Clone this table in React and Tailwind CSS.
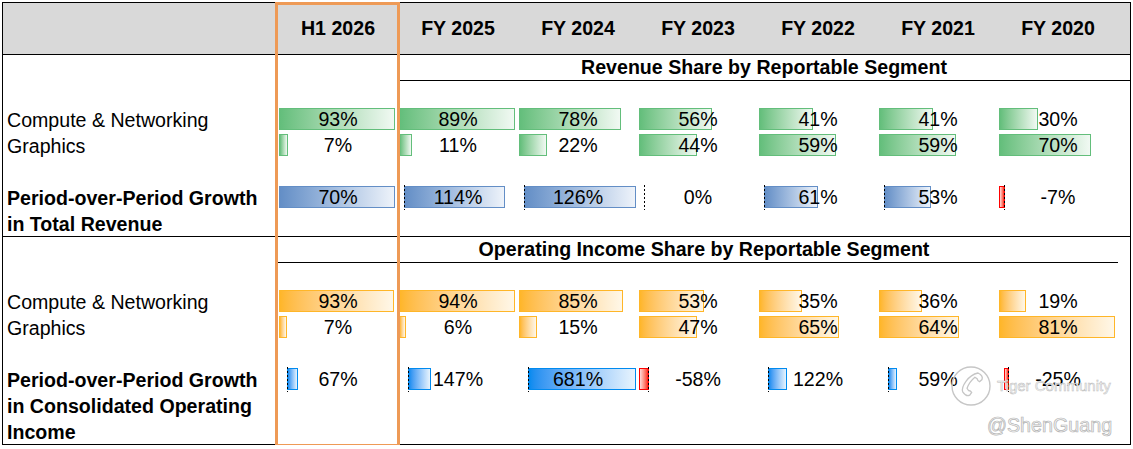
import React from "react";

const years = ["H1 2026", "FY 2025", "FY 2024", "FY 2023", "FY 2022", "FY 2021", "FY 2020"];

// fill styles for the excel-like data bars
const TONES = {
  green: "border-[#63BE7B] bg-linear-to-r from-[#63BE7B] to-[#F1F9F3]",
  orange: "border-[#FFB628] bg-linear-to-r from-[#FFB628] to-[#FFF7E8]",
  steel: "border-[#638EC6] bg-linear-to-r from-[#638EC6] to-[#EEF3FA]",
  sky: "border-[#008AEF] bg-linear-to-r from-[#008AEF] to-[#E8F4FD]",
  red: "border-[#FF0000] bg-linear-to-r from-[#FFD9D9] to-[#FF0000]",
};

// [label, width in px]
const revCompute = [["93%", 116], ["89%", 116], ["78%", 102], ["56%", 73], ["41%", 54], ["41%", 54], ["30%", 39]];
const revGraphics = [["7%", 9], ["11%", 13], ["22%", 28], ["44%", 58], ["59%", 77], ["59%", 77], ["70%", 92]];
const oiCompute = [["93%", 115], ["94%", 116], ["85%", 104], ["53%", 65], ["35%", 43], ["36%", 43], ["19%", 27]];
const oiGraphics = [["7%", 8], ["6%", 7], ["15%", 18], ["47%", 58], ["65%", 80], ["64%", 80], ["81%", 116]];

// [label, bar width (negative = red), axis offset, show axis]
const revGrowth = [["70%", 116, 1, false], ["114%", 101, 6, true], ["126%", 112, 6, true], ["0%", 0, 6, true], ["61%", 54, 6, true], ["53%", 47, 6, true], ["-7%", -5, 6, true]];
const oiGrowth = [["67%", 11, 9, true], ["147%", 23, 10, true], ["681%", 108, 10, true], ["-58%", -9, 10, true], ["122%", 19, 10, true], ["59%", 9, 10, true], ["-25%", -4, 10, true]];

function ShareCell({ value, width, tone }) {
    return (
        <div className="relative w-[120px] h-[26px] shrink-0 flex items-center justify-center">
            <div className={`absolute left-[1px] top-[2px] h-[22px] border ${TONES[tone]}`} style={{ width }} />
            <span className="relative translate-y-px">{value}</span>
        </div>
    );
}

function GrowthCell({ value, width, axis, showAxis, tone }) {
    return (
        <div className="relative w-[120px] h-[26px] shrink-0 flex items-center justify-center">
            {width > 0 && (
                <div className={`absolute top-[2px] h-[22px] border ${TONES[tone]}`} style={{ left: axis, width }} />
            )}
            {width < 0 && (
                <div className={`absolute top-[2px] h-[22px] border ${TONES.red}`} style={{ left: axis + width, width: -width + 1 }} />
            )}
            {showAxis && (
                <div
                    className="absolute top-[1px] h-[25px] w-px bg-[repeating-linear-gradient(to_bottom,#000_0_2px,transparent_2px_4px)]"
                    style={{ left: axis }}
                />
            )}
            <span className="relative translate-y-px">{value}</span>
        </div>
    );
}

function ShareRow({ label, data, tone }) {
    return (
        <div className="flex h-[26px]">
            <div className="w-[275px] shrink-0 pl-[4px] leading-[26px]">
                <div className="translate-y-px">{label}</div>
            </div>
            {data.map(([v, w], i) => (
                <ShareCell key={i} value={v} width={w} tone={tone} />
            ))}
        </div>
    );
}

function GrowthRow({ lines, data, tone }) {
    return (
        <div className="flex">
            <div className="w-[275px] shrink-0 pl-[4px] leading-[26px] font-bold">
                {lines.map(l => (
                    <div key={l} className="translate-y-px">{l}</div>
                ))}
            </div>
            <div className="flex items-start">
                {data.map(([v, w, a, s], i) => (
                    <GrowthCell key={i} value={v} width={w} axis={a} showAxis={s} tone={tone} />
                ))}
            </div>
        </div>
    );
}

export default function App() {
    return (
        <div className="relative pt-[2px] pl-[2px] bg-white text-black text-[19.6px] font-['Liberation_Sans','Arial',sans-serif]">
            <div className="w-[1129px] border border-black">
                {/* header */}
                <div className="flex h-[52px] bg-[#D9D9D9] border-b border-black font-bold">
                    <div className="w-[275px] shrink-0"></div>
                    {years.map(y => (
                        <div key={y} className="w-[120px] shrink-0 flex items-center justify-center">{y}</div>
                    ))}
                </div>

                {/* revenue section */}
                <div className="border-b border-black">
                    <div className="flex h-[26px]">
                        <div className="w-[395px] shrink-0"></div>
                        <div className="flex-1 border-b border-black font-bold flex items-center justify-center">
                            Revenue Share by Reportable Segment
                        </div>
                    </div>
                    <div className="h-[25px]"></div>
                    <ShareRow label="Compute & Networking" data={revCompute} tone="green" />
                    <ShareRow label="Graphics" data={revGraphics} tone="green" />
                    <div className="h-[26px]"></div>
                    <GrowthRow lines={["Period-over-Period Growth", "in Total Revenue"]} data={revGrowth} tone="steel" />
                </div>

                {/* operating income section */}
                <div>
                    <div className="flex h-[26px]">
                        <div className="w-[275px] shrink-0"></div>
                        <div className="flex-1 flex flex-col">
                            <div className="h-[25px] font-bold flex items-center justify-center">
                                Operating Income Share by Reportable Segment
                            </div>
                            <div className="h-px w-[840px] bg-black"></div>
                        </div>
                    </div>
                    <div className="h-[25px]"></div>
                    <ShareRow label="Compute & Networking" data={oiCompute} tone="orange" />
                    <ShareRow label="Graphics" data={oiGraphics} tone="orange" />
                    <div className="h-[26px]"></div>
                    <GrowthRow lines={["Period-over-Period Growth", "in Consolidated Operating", "Income"]} data={oiGrowth} tone="sky" />
                </div>
            </div>

            {/* highlighted current period */}
            <div className="absolute left-[275px] top-[2px] w-[125px] h-[445px] border-[3px] border-[#EE9A56] pointer-events-none"></div>

            {/* watermark */}
            <svg width="42" height="42" viewBox="0 0 42 42" className="absolute left-[950px] top-[365px]">
                <circle cx="21" cy="21" r="19" fill="none" stroke="#c6c6c6" strokeWidth="1.4" />
                <path
                    d="M28 8c3 1.5 5 4 4 6.5l-2.5 2.2c-1.2-.4-2-1.6-2.4-3l-2.2-1.4c-3 2.5-6.5 7-7.8 11l1.4 2.2c1.4.2 2.7.9 3.2 2l-2 2.7c-2.4 1.2-5.2-.7-7-3.4C11 22 18 10 28 8z"
                    fill="none"
                    stroke="#c6c6c6"
                    strokeWidth="1.3"
                />
            </svg>
            <div className="absolute left-[997px] top-[376px] text-[15px] leading-[20px] text-[#f6f6f6] [-webkit-text-stroke:0.5px_#bcbcbc]">
                Tiger Community
            </div>
            <div className="absolute left-[987px] top-[412px] text-[19.7px] leading-[26px] text-[#f6f6f6] [-webkit-text-stroke:0.7px_#b4b4b4]">
                @ShenGuang
            </div>
        </div>
    );
}
